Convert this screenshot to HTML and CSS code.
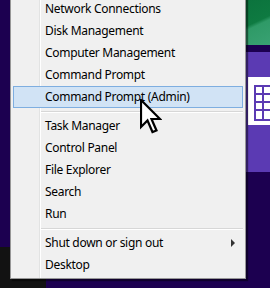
FILE: index.html
```html
<!DOCTYPE html>
<html>
<head>
<meta charset="utf-8">
<link rel="stylesheet" href="styles.css">
</head>
<body>
<div class="stage">
  <div class="tile-green"></div>
  <div class="tile-purple">
    <svg class="tile-icon" width="26" height="50" viewBox="0 0 26 50">
      <rect x="0" y="0" width="26" height="48" fill="#ffffff"/>
      <g fill="#5b3ab3">
        <rect x="6" y="8" width="2" height="36"/>
        <rect x="14" y="8" width="2" height="36"/>
        <rect x="22" y="8" width="2" height="36"/>
        <rect x="6" y="8" width="20" height="2"/>
        <rect x="6" y="16" width="20" height="2"/>
        <rect x="6" y="24" width="20" height="2"/>
        <rect x="6" y="32" width="20" height="2"/>
        <rect x="6" y="42" width="20" height="2"/>
      </g>
    </svg>
  </div>
  <div class="taskbar"></div>

  <div class="menu">
    <div class="item">Network Connections</div>
    <div class="item">Disk Management</div>
    <div class="item">Computer Management</div>
    <div class="item">Command Prompt</div>
    <div class="item active">Command Prompt (Admin)</div>
    <div class="sep"></div>
    <div class="item">Task Manager</div>
    <div class="item">Control Panel</div>
    <div class="item">File Explorer</div>
    <div class="item">Search</div>
    <div class="item">Run</div>
    <div class="sep"></div>
    <div class="item">Shut down or sign out<span class="arrow"></span></div>
    <div class="item">Desktop</div>
  </div>

  <svg class="cursor" width="22" height="36" viewBox="0 0 22 36">
    <polygon points="1,1 1,28 7.5,21.5 12.5,33 16.5,31.5 11.5,20 20,20" fill="#ffffff" stroke="#000000" stroke-width="2.2" stroke-linejoin="miter"/>
  </svg>
</div>
</body>
</html>
```
FILE: styles.css
```css
html, body {
  margin: 0;
  padding: 0;
}
body {
  background: #1c0050;
  width: 270px;
  height: 288px;
  overflow: hidden;
  font-family: "Noto Sans", "Segoe UI", sans-serif;
}
.stage {
  position: relative;
  width: 270px;
  height: 288px;
  overflow: hidden;
}
.tile-green {
  position: absolute;
  left: 246px;
  top: 0;
  width: 30px;
  height: 45px;
  background: linear-gradient(155deg, #0b733d 0%, #0e7a41 45%, #2f9a67 52%, #3aa274 100%);
}
.tile-purple {
  position: absolute;
  left: 246px;
  top: 52px;
  width: 30px;
  height: 120px;
  background: #5b3ab3;
}
.tile-icon {
  position: absolute;
  left: 2px;
  top: 25px;
}
.taskbar {
  position: absolute;
  left: 0;
  top: 247px;
  width: 46px;
  height: 41px;
  background: #121212;
}
.menu {
  position: absolute;
  left: 10px;
  top: -4px;
  width: 230px;
  padding: 1px 2px 2px 2px;
  background: #f0f0f0;
  border: 1px solid #979797;
  box-shadow: 2px 2px 1px rgba(0, 0, 0, 0.45);
  background-image: linear-gradient(to right, transparent 28px, #e2e3e3 28px, #e2e3e3 29px, #ffffff 29px, #ffffff 30px, transparent 30px);
}
.item {
  position: relative;
  height: 22px;
  line-height: 22px;
  padding-left: 32px;
  font-size: 12px;
  letter-spacing: -0.3px;
  color: #000;
  white-space: nowrap;
  box-sizing: border-box;
}
.item.active {
  background: #d1e3f5;
  border: 1px solid #7eaee0;
  line-height: 20px;
  padding-left: 31px;
}
.sep {
  height: 7px;
  margin-left: 28px;
  background: linear-gradient(to bottom, transparent 3px, #d7d7d7 3px, #d7d7d7 4px, #ffffff 4px, #ffffff 5px, transparent 5px);
}
.arrow {
  position: absolute;
  left: 218px;
  top: 7px;
  width: 0;
  height: 0;
  border-top: 4px solid transparent;
  border-bottom: 4px solid transparent;
  border-left: 4px solid #333;
}
.cursor {
  position: absolute;
  left: 140px;
  top: 99px;
}
```
